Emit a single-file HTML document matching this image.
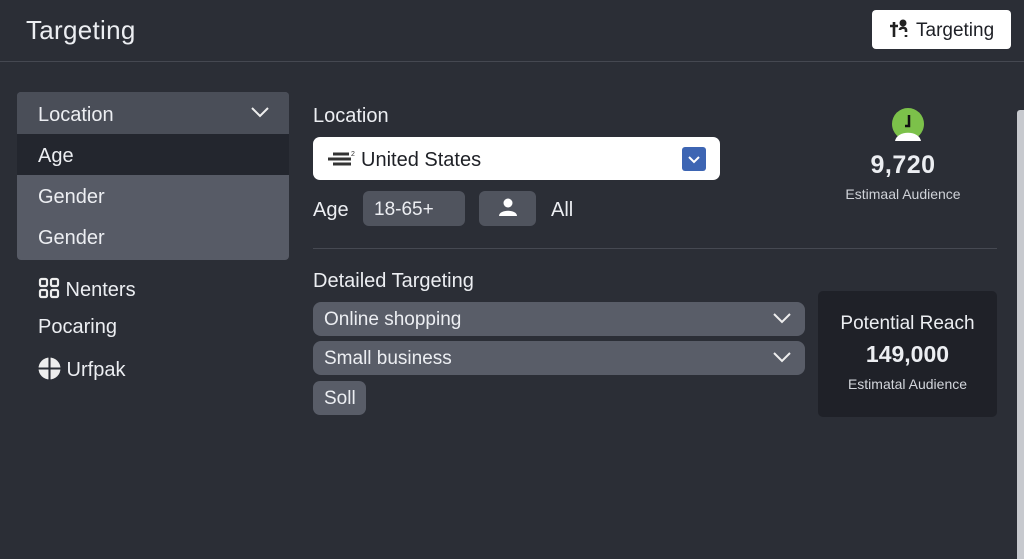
<!DOCTYPE html>
<html><head><style>
*{margin:0;padding:0;box-sizing:border-box}
body{width:1024px;height:559px;background:#2b2e36;font-family:"Liberation Sans",sans-serif;color:#eceef2;position:relative;overflow:hidden}
.a{position:absolute}
.t{font-size:20px;white-space:nowrap}
.sel{position:absolute;left:313px;width:492px;height:34px;background:#595d68;border-radius:8px;font-size:19px;padding:7px 0 0 11px}
.chev{position:absolute;right:14px;top:11px}
</style></head><body>
<div class="a t" style="left:26px;top:15px;font-size:26px;letter-spacing:0.3px">Targeting</div>
<div class="a" style="left:872px;top:10px;width:139px;height:39px;background:#fff;border-radius:4px;color:#1e2026;font-size:19px;padding:9px 0 0 16px">
<svg width="22" height="20" viewBox="0 0 22 20" style="vertical-align:-3px;margin-right:6px"><circle cx="15" cy="4" r="3.5" fill="#222"/><path d="M2 7h8M6 3v15M12 11c0-3 6-3 6 0v2M18 16v2" stroke="#222" stroke-width="2.6" fill="none"/></svg>Targeting</div>
<div class="a" style="left:0;top:61px;width:1024px;height:1px;background:#454851"></div>
<div class="a" style="left:1017px;top:110px;width:7px;height:449px;background:#c7c9ce;border-radius:3px 0 0 0"></div>

<div class="a" style="left:17px;top:92px;width:272px;height:168px;background:#575b66;border-radius:4px;overflow:hidden">
<div style="height:42px;background:#4a4e58;font-size:20px;padding:12px 0 0 21px;position:relative">Location<svg class="chev" style="right:20px;top:15px" width="18" height="11" viewBox="0 0 18 11"><path d="M1 1l8 8 8-8" stroke="#eee" stroke-width="2" fill="none"/></svg></div>
<div style="height:41px;background:#23262e;font-size:20px;padding:11px 0 0 21px">Age</div>
<div style="height:42px;font-size:20px;padding:11px 0 0 21px">Gender</div>
<div style="height:42px;font-size:20px;padding:10px 0 0 21px">Gender</div>
</div>
<div class="a t" style="left:38px;top:277px"><svg width="22" height="22" viewBox="0 0 22 22" style="vertical-align:-3px"><g fill="none" stroke="#eee" stroke-width="2.2"><rect x="2" y="2" width="7" height="7" rx="1.5"/><rect x="13" y="2" width="7" height="7" rx="1.5"/><rect x="2" y="13" width="7" height="7" rx="1.5"/><rect x="13" y="13" width="7" height="7" rx="1.5"/></g></svg> Nenters</div>
<div class="a t" style="left:38px;top:316px">Pocaring</div>
<div class="a t" style="left:38px;top:357px"><svg width="23" height="23" viewBox="0 0 22 22" style="vertical-align:-4px"><circle cx="11" cy="11" r="10.5" fill="#eee"/><path d="M11 0v22M0 11h22" stroke="#2b2e36" stroke-width="2"/></svg> Urfpak</div>

<div class="a t" style="left:313px;top:105px">Location</div>
<div class="a" style="left:313px;top:137px;width:407px;height:43px;background:#fff;border-radius:7px;color:#1e2026;font-size:20px;padding:12px 0 0 14px">
<svg width="30" height="18" viewBox="0 0 30 18" style="vertical-align:-2px;margin-right:4px"><path d="M6 4h16M1 9h23M6 14h18" stroke="#333" stroke-width="3"/><text x="24" y="6" font-size="7" fill="#333">2</text></svg>United States
<div class="a" style="right:14px;top:10px;width:24px;height:24px;background:#3d65b3;border-radius:3px"><svg width="24" height="24" viewBox="0 0 24 24"><path d="M7 10l5 5 5-5" stroke="#fff" stroke-width="2" fill="none"/></svg></div></div>
<div class="a t" style="left:313px;top:199px">Age</div>
<div class="a" style="left:363px;top:191px;width:102px;height:35px;background:#50545e;border-radius:6px;font-size:19px;padding:8px 0 0 11px">18-65+</div>
<div class="a" style="left:479px;top:191px;width:57px;height:35px;background:#50545e;border-radius:6px"><svg width="57" height="35" viewBox="0 0 57 35"><circle cx="29" cy="12" r="4.5" fill="#fff"/><path d="M20 25c0-7 18-7 18 0z" fill="#fff"/></svg></div>
<div class="a t" style="left:551px;top:199px">All</div>
<div class="a" style="left:313px;top:248px;width:684px;height:1px;background:#464952"></div>

<div class="a" style="left:891px;top:108px;width:34px;height:34px"><svg width="34" height="34" viewBox="0 0 34 34"><circle cx="17" cy="16" r="16" fill="#7cc14a"/><path d="M18 7v11h-4" stroke="#111" stroke-width="2.5" fill="none"/><path d="M4 33c2-11 24-11 26 0z" fill="#fff"/></svg></div>
<div class="a" style="left:843px;top:151px;width:120px;text-align:center;font-size:25px;font-weight:bold;letter-spacing:0.5px">9,720</div>
<div class="a" style="left:833px;top:186px;width:140px;text-align:center;font-size:14px;color:#cfd2d8">Estimaal Audience</div>

<div class="a t" style="left:313px;top:270px">Detailed Targeting</div>
<div class="sel" style="top:302px">Online shopping<svg class="chev" width="18" height="11" viewBox="0 0 18 11"><path d="M1 1l8 8 8-8" stroke="#eee" stroke-width="2" fill="none"/></svg></div>
<div class="sel" style="top:341px">Small business<svg class="chev" width="18" height="11" viewBox="0 0 18 11"><path d="M1 1l8 8 8-8" stroke="#eee" stroke-width="2" fill="none"/></svg></div>
<div class="a" style="left:313px;top:381px;width:53px;height:34px;background:#595d68;border-radius:7px;font-size:19px;padding:7px 0 0 11px">Soll</div>

<div class="a" style="left:818px;top:291px;width:179px;height:126px;background:#1f2128;border-radius:5px;text-align:center">
<div style="font-size:19px;margin-top:22px">Potential Reach</div>
<div style="font-size:23px;font-weight:bold;margin-top:6px">149,000</div>
<div style="font-size:14px;color:#d3d6dc;margin-top:8px">Estimatal Audience</div>
</div>
</body></html>
